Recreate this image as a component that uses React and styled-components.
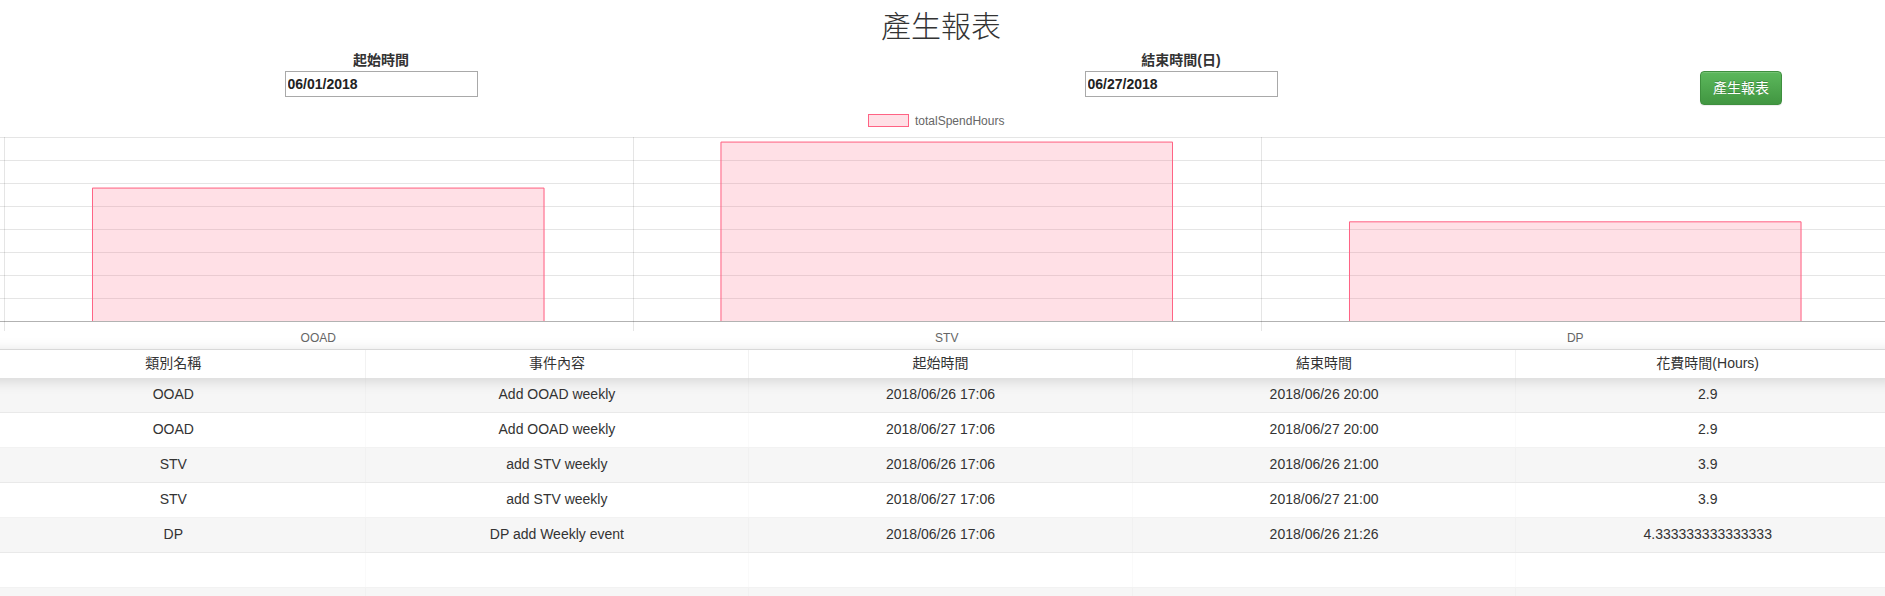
import React from "react";
import styled, { createGlobalStyle } from "styled-components";

const FONT = '"Liberation Sans", "Noto Sans CJK TC", sans-serif';

const GlobalStyle = createGlobalStyle`
  html, body {
    margin: 0;
    padding: 0;
    background: #fff;
    overflow: hidden;
  }
  body {
    font-family: ${FONT};
    font-size: 14px;
    line-height: 1.42857;
    color: #333;
  }
  * { box-sizing: border-box; }
`;

const Page = styled.div`
  width: 1920px;
  margin-left: -19px;
`;

const Title = styled.h2`
  margin: 0;
  padding-top: 10px;
  font-size: 30px;
  line-height: 33px;
  font-weight: 300;
  text-align: center;
  color: #333;
`;

const FormRow = styled.div`
  display: grid;
  grid-template-columns: 5fr 5fr 2fr;
  margin-top: 7px;
  height: 55px;
`;

const Field = styled.div`
  display: flex;
  flex-direction: column;
  align-items: center;
`;

const Label = styled.label`
  font-weight: 700;
  font-size: 14px;
  line-height: 20px;
  color: #333;
`;

const DateInput = styled.input`
  margin-top: 1px;
  width: 193px;
  height: 26px;
  border: 1px solid #a9a9a9;
  padding: 1px 2px;
  font-family: ${FONT};
  font-size: 14px;
  font-weight: 700;
  color: #222;
  background: #fff;
  outline: none;
`;

const ButtonCell = styled.div`
  display: flex;
  justify-content: center;
  padding-top: 21px;
`;

const SuccessButton = styled.button`
  height: 34px;
  padding: 6px 12px;
  font-family: ${FONT};
  font-size: 14px;
  line-height: 20px;
  color: #fff;
  border: 1px solid #3e8f3e;
  border-radius: 4px;
  background-image: linear-gradient(to bottom, #5cb85c 0%, #419641 100%);
  text-shadow: 0 -1px 0 rgba(0, 0, 0, 0.2);
  box-shadow: inset 0 1px 0 rgba(255, 255, 255, 0.15), 0 1px 1px rgba(0, 0, 0, 0.075);
  cursor: pointer;
`;

const ChartBox = styled.div`
  margin-top: 3px;
  height: 241px;
`;

const ChartSvg = styled.svg`
  display: block;
  width: 1920px;
  height: 241px;
  font-family: "Liberation Sans", Arial, sans-serif;
`;

const Table = styled.div`
  border-top: 1px solid rgba(0, 0, 0, 0.1);
  width: 1918px;
  margin-left: 1px;
`;

const HeaderRow = styled.div`
  position: relative;
  z-index: 1;
  display: grid;
  grid-template-columns: repeat(5, 1fr);
  height: 28px;
  background: #fff;
  box-shadow: 0 2px 15px 0 rgba(0, 0, 0, 0.15);
`;

const HeaderCell = styled.div`
  display: flex;
  align-items: center;
  justify-content: center;
  padding: 0 5px;
  border-right: 1px solid rgba(0, 0, 0, 0.05);
  font-size: 14px;
  color: #333;
`;

const BodyRow = styled.div`
  display: grid;
  grid-template-columns: repeat(5, 1fr);
  height: 35px;
  border-bottom: 1px solid rgba(0, 0, 0, 0.05);
  background: ${(p) => (p.$striped ? "rgba(0,0,0,0.035)" : "#fff")};
`;

const Cell = styled.div`
  display: flex;
  align-items: center;
  justify-content: center;
  padding: 7px 5px;
  border-right: 1px solid rgba(0, 0, 0, 0.02);
  font-size: 14px;
  color: #333;
  white-space: nowrap;
`;

const categories = [
  { name: "OOAD", value: 5.8 },
  { name: "STV", value: 7.8 },
  { name: "DP", value: 4.333333333333333 },
];

const rows = [
  ["OOAD", "Add OOAD weekly", "2018/06/26 17:06", "2018/06/26 20:00", "2.9"],
  ["OOAD", "Add OOAD weekly", "2018/06/27 17:06", "2018/06/27 20:00", "2.9"],
  ["STV", "add STV weekly", "2018/06/26 17:06", "2018/06/26 21:00", "3.9"],
  ["STV", "add STV weekly", "2018/06/27 17:06", "2018/06/27 21:00", "3.9"],
  ["DP", "DP add Weekly event", "2018/06/26 17:06", "2018/06/26 21:26", "4.333333333333333"],
];

const headers = ["類別名稱", "事件內容", "起始時間", "結束時間", "花費時間(Hours)"];

function BarChart() {
  const left = 4;
  const catW = 628.5;
  const top = 29;
  const step = 23;
  const axisY = top + step * 8;
  const gridYs = Array.from({ length: 8 }, (_, i) => top + i * step);
  const barW = catW * 0.72;
  return (
    <ChartSvg viewBox="-19 0 1920 241">
      <rect x="868.5" y="6.5" width="40" height="12" fill="rgba(255,99,132,0.2)" stroke="rgb(255,99,132)" strokeWidth="1" />
      <text x="915" y="16.5" fontSize="12" fill="#666">totalSpendHours</text>
      {gridYs.map((y) => (
        <line key={y} x1="-19" x2="1901" y1={y + 0.5} y2={y + 0.5} stroke="rgba(0,0,0,0.1)" strokeWidth="1" />
      ))}
      {[0, 1, 2, 3].map((i) => {
        const x = Math.round(left + i * catW) + 0.5;
        return <line key={i} x1={x} x2={x} y1={top} y2={axisY + 10} stroke="rgba(0,0,0,0.1)" strokeWidth="1" />;
      })}
      {categories.map((c, i) => {
        const cx = left + catW * (i + 0.5);
        const x0 = cx - barW / 2;
        const h = c.value * step;
        const y0 = axisY - h;
        return (
          <g key={c.name}>
            <rect x={x0} y={y0} width={barW} height={h} fill="rgba(255,99,132,0.2)" />
            <path
              d={`M${x0 + 0.5} ${axisY} V${y0 + 0.5} H${x0 + barW - 0.5} V${axisY}`}
              fill="none"
              stroke="rgb(255,99,132)"
              strokeWidth="1"
            />
            <text x={cx} y={234} fontSize="12" fill="#666" textAnchor="middle">{c.name}</text>
          </g>
        );
      })}
      <line x1="-19" x2="1901" y1={axisY + 0.5} y2={axisY + 0.5} stroke="rgba(0,0,0,0.3)" strokeWidth="1" />
    </ChartSvg>
  );
}

export default function App() {
  const padded = [...rows, ...Array.from({ length: 5 }, () => ["", "", "", "", ""])];
  return (
    <Page>
      <GlobalStyle />
      <Title>產生報表</Title>
      <FormRow>
        <Field>
          <Label>起始時間</Label>
          <DateInput defaultValue="06/01/2018" />
        </Field>
        <Field>
          <Label>結束時間(日)</Label>
          <DateInput defaultValue="06/27/2018" />
        </Field>
        <ButtonCell>
          <SuccessButton>產生報表</SuccessButton>
        </ButtonCell>
      </FormRow>
      <ChartBox>
        <BarChart />
      </ChartBox>
      <Table>
        <HeaderRow>
          {headers.map((h) => (
            <HeaderCell key={h}>{h}</HeaderCell>
          ))}
        </HeaderRow>
        {padded.map((r, i) => (
          <BodyRow key={i} $striped={i % 2 === 0}>
            {r.map((c, j) => (
              <Cell key={j}>{c || "\u00a0"}</Cell>
            ))}
          </BodyRow>
        ))}
      </Table>
    </Page>
  );
}
